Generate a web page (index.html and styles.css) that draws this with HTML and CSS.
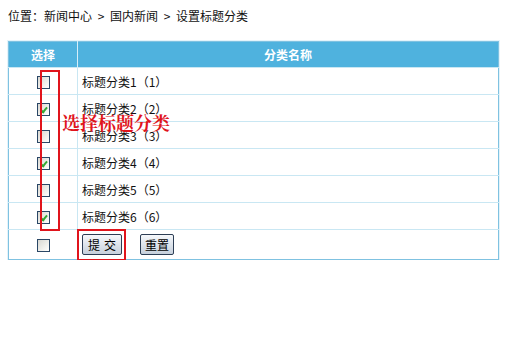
FILE: index.html
```html
<!DOCTYPE html>
<html lang="zh-CN">
<head>
<meta charset="utf-8">
<title>设置标题分类</title>
<link rel="stylesheet" href="styles.css">
</head>
<body>
<div class="crumb">位置：新闻中心<span class="sep">&gt;</span>国内新闻<span class="sep">&gt;</span>设置标题分类</div>
<div class="wrap">
  <table class="grid">
    <thead>
      <tr><th class="c1">选择</th><th>分类名称</th></tr>
    </thead>
    <tbody>
      <tr><td class="c1"><span class="cb"></span></td><td>标题分类1（1）</td></tr>
      <tr><td class="c1"><span class="cb on"></span></td><td>标题分类2（2）</td></tr>
      <tr><td class="c1"><span class="cb"></span></td><td>标题分类3（3）</td></tr>
      <tr><td class="c1"><span class="cb on"></span></td><td>标题分类4（4）</td></tr>
      <tr><td class="c1"><span class="cb"></span></td><td>标题分类5（5）</td></tr>
      <tr><td class="c1"><span class="cb on"></span></td><td>标题分类6（6）</td></tr>
      <tr class="last"><td class="c1"><span class="cb"></span></td><td><span class="btn first">提<span class="gap"></span>交</span><span class="btn">重置</span></td></tr>
    </tbody>
  </table>
  <div class="mark-col"></div>
  <div class="mark-btn"></div>
  <div class="mark-text">选择标题分类</div>
</div>
</body>
</html>
```
FILE: styles.css
```css
body {
  margin: 0;
  background: #fff;
  font-family: "Noto Sans CJK SC", "DejaVu Sans", sans-serif;
  font-size: 12px;
  color: #111;
}
.crumb {
  padding: 8px 0 0 8px;
  height: 24px;
  line-height: 16px;
}
.sep {
  display: inline-block;
  width: 18px;
  text-align: center;
}
.wrap {
  position: relative;
  margin: 9px 0 0 8px;
  width: 491px;
}
.grid {
  width: 491px;
  border-collapse: collapse;
  border: 1px solid #7fc2e1;
  box-shadow: 0 0 0 1px #e4f3fa;
}
.grid th {
  background: #4fb2de;
  color: #fff;
  font-weight: bold;
  height: 25px;
  padding: 0;
  border-left: 1px solid #d6eef9;
  text-align: center;
}
.grid th.c1 { border-left: 0; }
.grid td {
  height: 26px;
  padding: 0 0 0 4px;
  border-top: 1px solid #c9e7f3;
  border-left: 1px solid #c9e7f3;
  vertical-align: middle;
}
.grid .c1 {
  width: 68px;
  text-align: center;
  padding: 0;
  border-left: 0;
}
.grid tr.last td { height: 29px; }
.cb {
  display: inline-block;
  width: 11px;
  height: 11px;
  border: 1px solid #2a4766;
  background: linear-gradient(135deg, #d8d8d2 0%, #f2f2ee 65%, #ffffff 100%);
  vertical-align: middle;
  position: relative;
  top: -1px;
}
.cb.on::after {
  content: "";
  position: absolute;
  left: 4px;
  top: 2px;
  width: 2px;
  height: 5px;
  border: solid #34a634;
  border-width: 0 2px 2px 0;
  transform: rotate(40deg);
}
.btn {
  display: inline-block;
  height: 19px;
  line-height: 19px;
  padding: 0 4px;
  border: 1px solid #2d3e55;
  border-radius: 2px;
  background: linear-gradient(#f6f8fb, #c6d0dc);
  color: #000;
  font-size: 12px;
  vertical-align: middle;
  margin-left: 18px;
}
.btn.first { margin-left: 0; padding: 0 5px; }
.gap { display: inline-block; width: 4px; }
.mark-col {
  position: absolute;
  left: 32px;
  top: 29px;
  width: 16px;
  height: 157px;
  border: 2px solid #e0141c;
}
.mark-btn {
  position: absolute;
  left: 69px;
  top: 188px;
  width: 45px;
  height: 28px;
  border: 2px solid #e0141c;
}
.mark-text {
  position: absolute;
  left: 54px;
  top: 70px;
  color: #e0141c;
  font-family: "Noto Serif CJK SC", "Noto Sans CJK SC", serif;
  font-weight: bold;
  font-size: 18px;
  line-height: 22px;
}
```
